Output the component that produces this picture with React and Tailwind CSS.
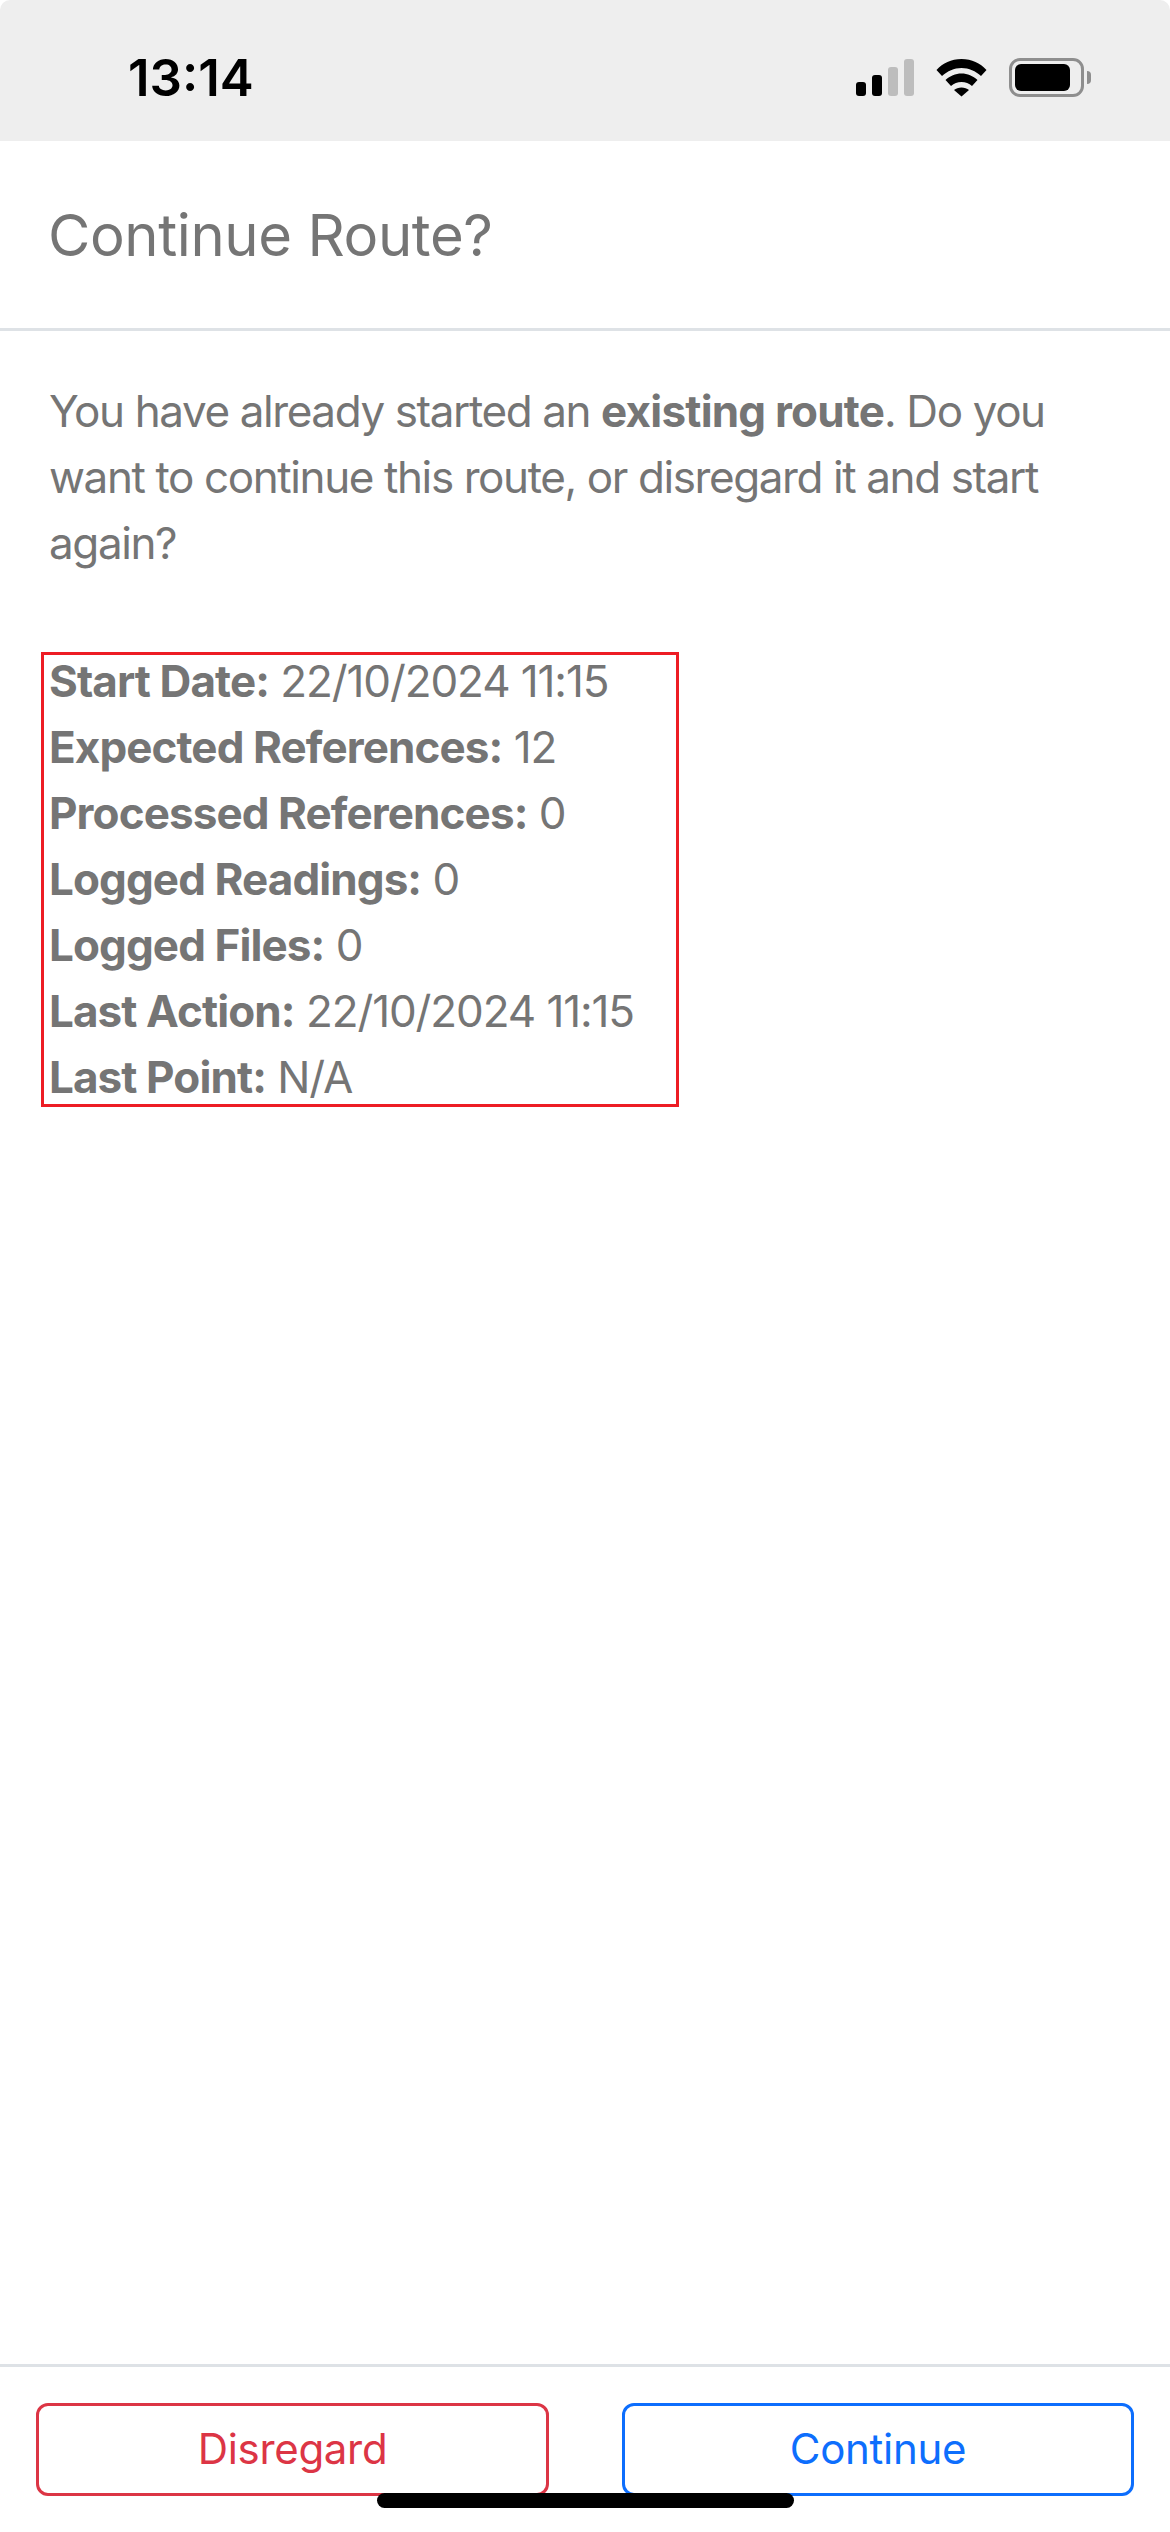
import React from "react";

const details = [
  ["Start Date:", "22/10/2024 11:15"],
  ["Expected References:", "12"],
  ["Processed References:", "0"],
  ["Logged Readings:", "0"],
  ["Logged Files:", "0"],
  ["Last Action:", "22/10/2024 11:15"],
  ["Last Point:", "N/A"],
];

const StatusIcons = () => (
  <div className="flex items-start">
    <div className="flex items-end gap-[6px] h-[37px] mt-[1px]">
      <span className="w-[10px] h-[14px] rounded-[3px] bg-black" />
      <span className="w-[10px] h-[21px] rounded-[3px] bg-black" />
      <span className="w-[10px] h-[29px] rounded-[3px] bg-[#bdbdbd]" />
      <span className="w-[10px] h-[37px] rounded-[3px] bg-[#bdbdbd]" />
    </div>
    <svg width="51" height="38" viewBox="0 0 51 38" className="ml-[22px] mt-[1px]">
      <path d="M0.5 11C7 4 15 0 25.5 0C36 0 44 4 50.5 11L45 17C39.5 12 33 9 25.5 9C18 9 11.5 12 6 17Z" fill="#000" />
      <path d="M9.5 21C14 17 19.5 14.5 25.5 14.5C31.5 14.5 37 17 41.5 21L36 27C33 24.5 29.5 23 25.5 23C21.5 23 18 24.5 15 27Z" fill="#000" />
      <path d="M18 31C20 29.5 22.5 28.5 25.5 28.5C28.5 28.5 31 29.5 33 31L25.5 37.5Z" fill="#000" />
    </svg>
    <div className="ml-[22px] w-[75px] h-[39px] rounded-[11px] border-[3px] border-[#8e8e8e] p-[3px]">
      <div className="w-[55px] h-[27px] rounded-[6px] bg-black" />
    </div>
    <span className="ml-[3px] mt-[13px] w-[4px] h-[13px] rounded-r-[4px] bg-[#8e8e8e]" />
  </div>
);

const App = () => {
  return (
    <div className="relative flex flex-col h-[2532px] w-[1170px] bg-white font-['Inter',sans-serif] text-[#757575] overflow-hidden">
      <div className="h-[141px] shrink-0 bg-[#eeeeee] rounded-t-[10px] flex items-start justify-between pl-[128px] pr-[79px] pt-[58px]">
        <span className="text-[51px] leading-[40px] font-semibold text-black">13:14</span>
        <StatusIcons />
      </div>

      <div className="h-[190px] shrink-0 border-b-[3px] border-[#dee2e6] flex items-center px-[48px]">
        <h1 className="text-[58px] leading-none font-normal tracking-[-0.4px]">Continue Route?</h1>
      </div>

      <div className="flex-1 px-[49px] pt-[47px] text-[44px] leading-[66px] tracking-[-1.4px]">
        <p>
          You have already started an <b className="font-bold tracking-[-0.8px]">existing route</b>. Do you want to continue this route, or disregard it and start again?
        </p>
        <div className="relative mt-[72px]">
          {details.map(([label, value]) => (
            <div key={label} className="tracking-[-1.1px]">
              <b className="font-bold tracking-[-0.9px]">{label}</b> {value}
            </div>
          ))}
          {/* red annotation box drawn over the details */}
          <div className="absolute left-[-8px] top-[4px] w-[638px] h-[455px] border-[3px] border-[#ed1c24]" />
        </div>
      </div>

      <div className="h-[168px] shrink-0 border-t-[3px] border-[#dee2e6] flex justify-between px-[36px] pt-[36px] text-[42px] tracking-[-0.3px] leading-none">
        <button className="w-[513px] h-[93px] rounded-[12px] border-[3px] border-[#dc3545] text-[#dc3545] pb-[2px]">Disregard</button>
        <button className="w-[512px] h-[93px] rounded-[12px] border-[3px] border-[#0d6efd] text-[#0d6efd] pb-[2px]">Continue</button>
      </div>

      <div className="absolute left-[377px] top-[2493px] w-[417px] h-[15px] rounded-full bg-black" />
    </div>
  );
};

export default App;
